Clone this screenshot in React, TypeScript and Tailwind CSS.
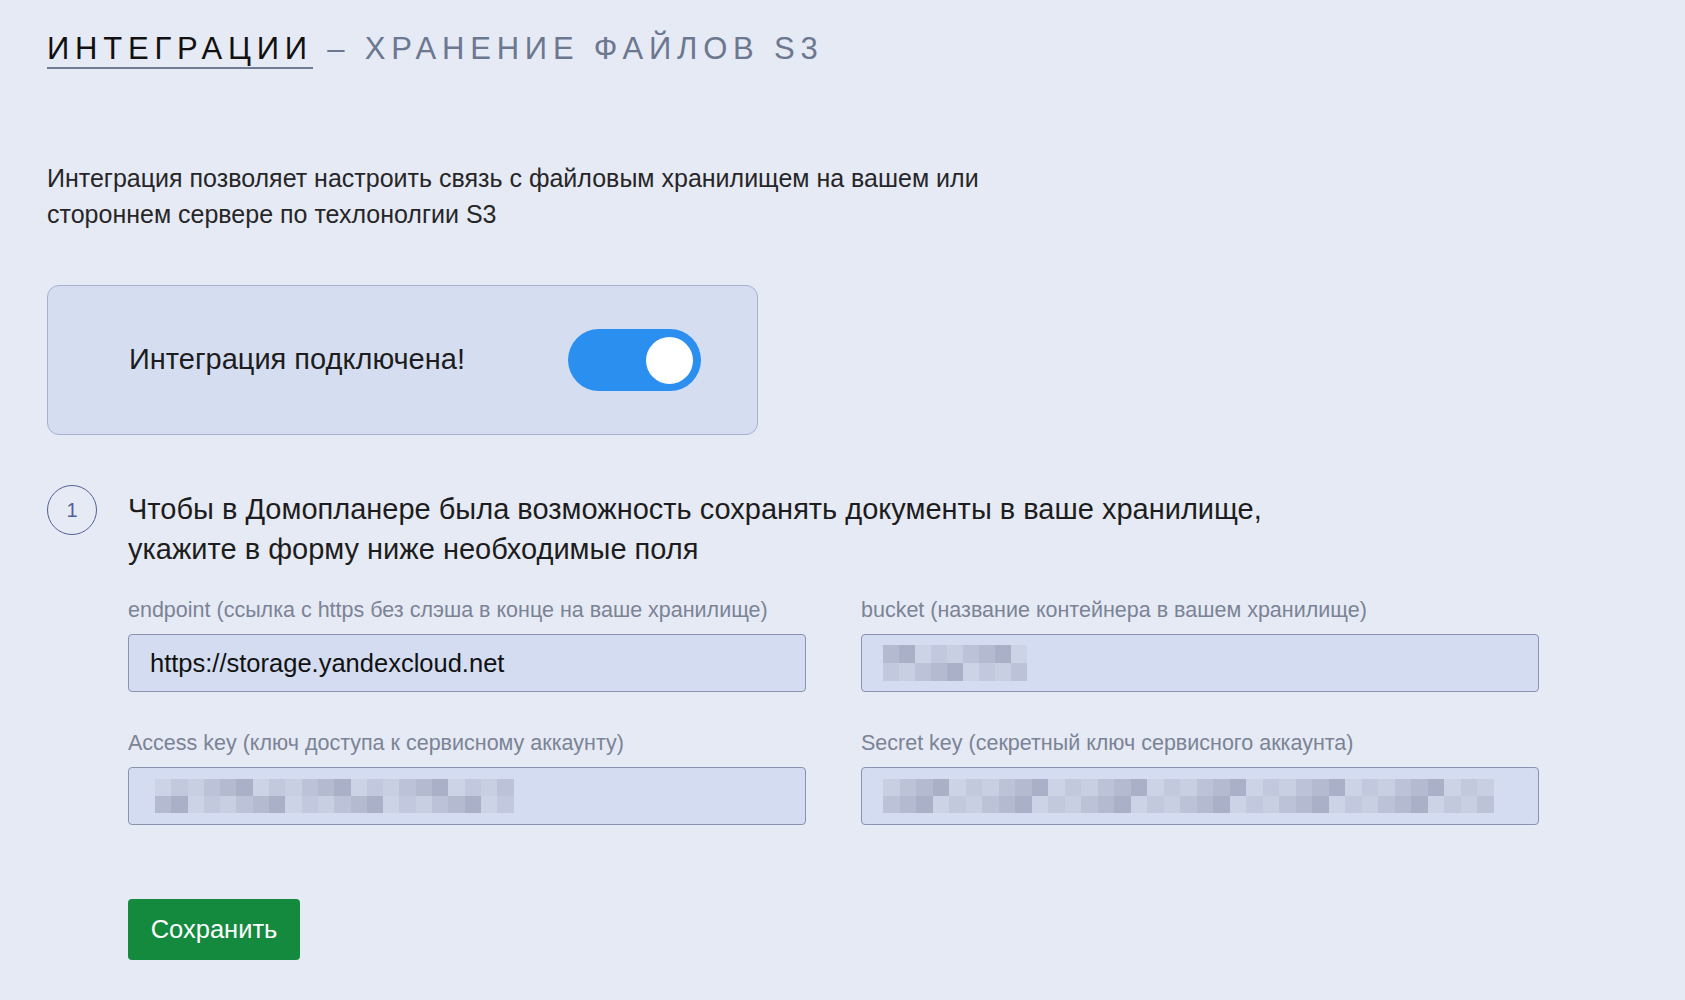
import React from "react";

const shades = [
  "bg-[#c9cfe3]",
  "bg-[#bcc3d9]",
  "bg-[#b4bbd1]",
  "bg-[#a9b0c8]",
  "bg-[#cdd3e7]",
  "bg-[#c2c8dd]",
];

function Mosaic({ cols, rows, seed, cell }: { cols: number; rows: number; seed: number; cell: string }) {
  const cells: string[] = [];
  let s = seed;
  for (let i = 0; i < cols * rows; i++) {
    s = (s * 9301 + 49297) % 233280;
    cells.push(shades[s % shades.length]);
  }
  return (
    <div className="flex flex-col">
      {Array.from({ length: rows }).map((_, r) => (
        <div key={r} className="flex">
          {Array.from({ length: cols }).map((_, c) => (
            <div key={c} className={`${cell} ${cells[r * cols + c]}`} />
          ))}
        </div>
      ))}
    </div>
  );
}

function Field({ label, children }: { label: string; children?: React.ReactNode }) {
  return (
    <div className="flex flex-col">
      <div className="text-[21.5px] leading-[24px] text-[#7b8396] mb-[12px] whitespace-nowrap">{label}</div>
      <div className="h-[58px] bg-[#d3dcf0] border-[1.5px] border-[#8a93b0] rounded-[4px] pl-[21px] flex items-center">
        {children}
      </div>
    </div>
  );
}

export default function App() {
  return (
    <div className="min-h-screen bg-[#e6eaf4] pt-[31px] pl-[47px] font-['Liberation_Sans',Arial,sans-serif]">
      <h1 className="text-[31px] leading-[36px] tracking-[0.187em] font-normal whitespace-nowrap">
        <span className="inline-block border-b-2 border-[#6f7d96] text-[#111111]">ИНТЕГРАЦИИ</span>
        <span className="text-[#6b7890]"> – ХРАНЕНИЕ ФАЙЛОВ S3</span>
      </h1>

      <p className="mt-[91px] text-[25px] leading-[36px] text-[#262628]">
        Интеграция позволяет настроить связь с файловым хранилищем на вашем или
        <br />
        стороннем сервере по техлонолгии S3
      </p>

      <div className="mt-[53px] w-[711px] h-[150px] bg-[#d5def1] border border-[#a5b0cc] rounded-[12px] flex items-center justify-between pl-[81px] pr-[56px]">
        <span className="text-[29px] text-[#1d1d20]">Интеграция подключена!</span>
        <div className="w-[133px] h-[62px] rounded-full bg-[#2b8ff0] flex items-center justify-end pr-[8px]">
          <div className="w-[47px] h-[47px] rounded-full bg-white" />
        </div>
      </div>

      <div className="mt-[50px] flex items-start">
        <div className="w-[50px] h-[50px] shrink-0 rounded-full border-[1.5px] border-[#51609a] flex items-center justify-center text-[20px] text-[#51609a]">
          1
        </div>
        <div className="ml-[31px] pt-[4px]">
          <div className="text-[29px] leading-[40px] text-[#1d1d20] whitespace-nowrap">
            Чтобы в Домопланере была возможность сохранять документы в ваше хранилище,
            <br />
            укажите в форму ниже необходимые поля
          </div>

          <div className="mt-[29px] grid grid-cols-[678px_678px] gap-x-[55px] gap-y-[39px]">
            <Field label="endpoint (ссылка с https без слэша в конце на ваше хранилище)">
              <span className="text-[25.5px] text-[#111111]">https://storage.yandexcloud.net</span>
            </Field>
            <Field label="bucket (название контейнера в вашем хранилище)">
              <Mosaic cols={9} rows={2} seed={7} cell="w-[16px] h-[18px]" />
            </Field>
            <Field label="Access key (ключ доступа к сервисному аккаунту)">
              <div className="pl-[5px]">
                <Mosaic cols={22} rows={2} seed={3} cell="w-[16.3px] h-[17px]" />
              </div>
            </Field>
            <Field label="Secret key (секретный ключ сервисного аккаунта)">
              <Mosaic cols={37} rows={2} seed={11} cell="w-[16.5px] h-[17px]" />
            </Field>
          </div>

          <button className="mt-[74px] w-[172px] h-[61px] rounded-[4px] bg-[#148a3f] text-white text-[25.5px]">
            Сохранить
          </button>
        </div>
      </div>
    </div>
  );
}
